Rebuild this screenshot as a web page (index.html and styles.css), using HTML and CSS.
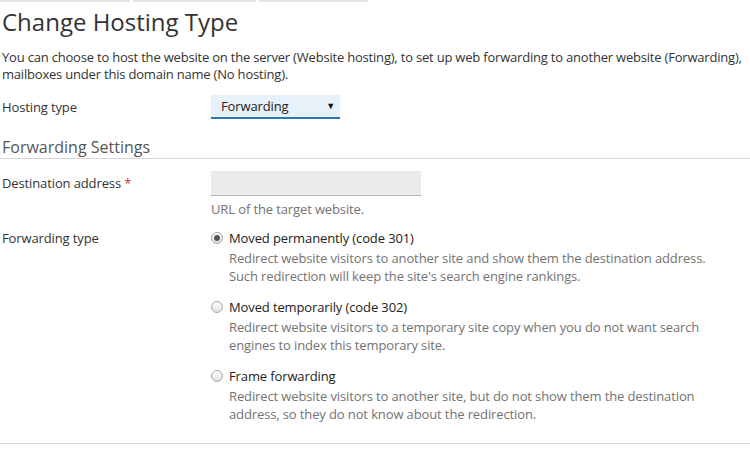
FILE: index.html
```html
<!DOCTYPE html>
<html>
<head>
<meta charset="utf-8">
<link rel="stylesheet" href="styles.css">
</head>
<body>
<div class="tabs">
  <span class="tab t1"></span>
  <span class="tab t2"></span>
  <span class="tab t3"></span>
</div>
<h1 class="title">Change Hosting Type</h1>
<p class="intro"><span class="line">You can choose to host the website on the server (Website hosting), to set up web forwarding to another website (Forwarding),</span><span class="line">mailboxes under this domain name (No hosting).</span></p>

<div class="row row-hosting">
  <div class="label">Hosting type</div>
  <div class="field">
    <div class="select"><span>Forwarding</span><span class="caret">&#9660;</span></div>
  </div>
</div>

<h2 class="section">Forwarding Settings</h2>

<div class="row row-dest">
  <div class="label">Destination address <span class="req">*</span></div>
  <div class="field">
    <div class="input"></div>
    <div class="hint">URL of the target website.</div>
  </div>
</div>

<div class="row row-type">
  <div class="label">Forwarding type</div>
  <div class="field">
    <div class="option">
      <span class="radio checked"></span>
      <div class="opt-body">
        <div class="opt-label">Moved permanently (code 301)</div>
        <div class="opt-desc">Redirect website visitors to another site and show them the destination address.<br>Such redirection will keep the site's search engine rankings.</div>
      </div>
    </div>
    <div class="option">
      <span class="radio"></span>
      <div class="opt-body">
        <div class="opt-label">Moved temporarily (code 302)</div>
        <div class="opt-desc">Redirect website visitors to a temporary site copy when you do not want search<br>engines to index this temporary site.</div>
      </div>
    </div>
    <div class="option">
      <span class="radio"></span>
      <div class="opt-body">
        <div class="opt-label">Frame forwarding</div>
        <div class="opt-desc">Redirect website visitors to another site, but do not show them the destination<br>address, so they do not know about the redirection.</div>
      </div>
    </div>
  </div>
</div>
<div class="bottom-rule"></div>
</body>
</html>
```
FILE: styles.css
```css
html, body {
  margin: 0;
  padding: 0;
  overflow: hidden;
  background: #fff;
}
body {
  font-family: "Open Sans", "Noto Sans", sans-serif;
  font-size: 13px;
  letter-spacing: -0.12px;
  color: #333;
  line-height: 18px;
}
.tabs {
  display: flex;
  gap: 3px;
  height: 2px;
}
.tab {
  display: block;
  height: 2px;
  background: #e3e3e3;
}
.t1 { width: 130px; }
.t2 { width: 123px; }
.t3 { width: 109px; }
.title {
  margin: 5px 0 0 2px;
  font-size: 24px;
  font-weight: 400;
  letter-spacing: 0;
  line-height: 30px;
  color: #333;
}
.intro {
  margin: 12px 0 0 2px;
  line-height: 17px;
  letter-spacing: -0.2px;
}
.intro .line {
  display: block;
  white-space: nowrap;
}
.row {
  display: flex;
  padding-left: 2px;
}
.label {
  width: 209px;
  flex: none;
}
.req { color: #c6372d; }
.row-hosting {
  margin-top: 13px;
}
.row-hosting .label { padding-top: 2px; }
.select {
  box-sizing: border-box;
  width: 129px;
  height: 24px;
  margin-top: -1px;
  background: #e7f1f9;
  border-bottom: 2px solid #2978b2;
  display: flex;
  justify-content: space-between;
  align-items: center;
  padding: 0 5px 0 10px;
  color: #222;
}
.caret {
  font-size: 9px;
  color: #111;
}
.section {
  margin: 17px 0 0 0;
  padding: 0 0 0 2px;
  font-size: 16px;
  font-weight: 400;
  letter-spacing: 0;
  line-height: 22px;
  color: #555;
  border-bottom: 1px solid #d6d6d6;
}
.row-dest { margin-top: 12px; }
.row-dest .label { padding-top: 3px; }
.input {
  box-sizing: border-box;
  width: 210px;
  height: 25px;
  background: #ebebeb;
  border-bottom: 1px solid #b5b5b5;
}
.hint {
  margin-top: 4px;
  color: #737373;
}
.row-type { margin-top: 11px; }
.option {
  display: flex;
  margin-bottom: 13px;
}
.radio {
  box-sizing: border-box;
  flex: none;
  width: 12px;
  height: 12px;
  margin: 3px 6px 0 0;
  border-radius: 50%;
  border: 1px solid #a9a9a9;
  background: linear-gradient(#fdfdfd, #e0e0e0);
  position: relative;
}
.radio.checked::after {
  content: "";
  position: absolute;
  left: 2px;
  top: 2px;
  width: 6px;
  height: 6px;
  border-radius: 50%;
  background: #555;
}
.opt-label { color: #222; }
.opt-desc {
  margin-top: 2px;
  color: #737373;
}
.bottom-rule {
  margin-top: 7px;
  border-top: 1px solid #d6d6d6;
}
```
